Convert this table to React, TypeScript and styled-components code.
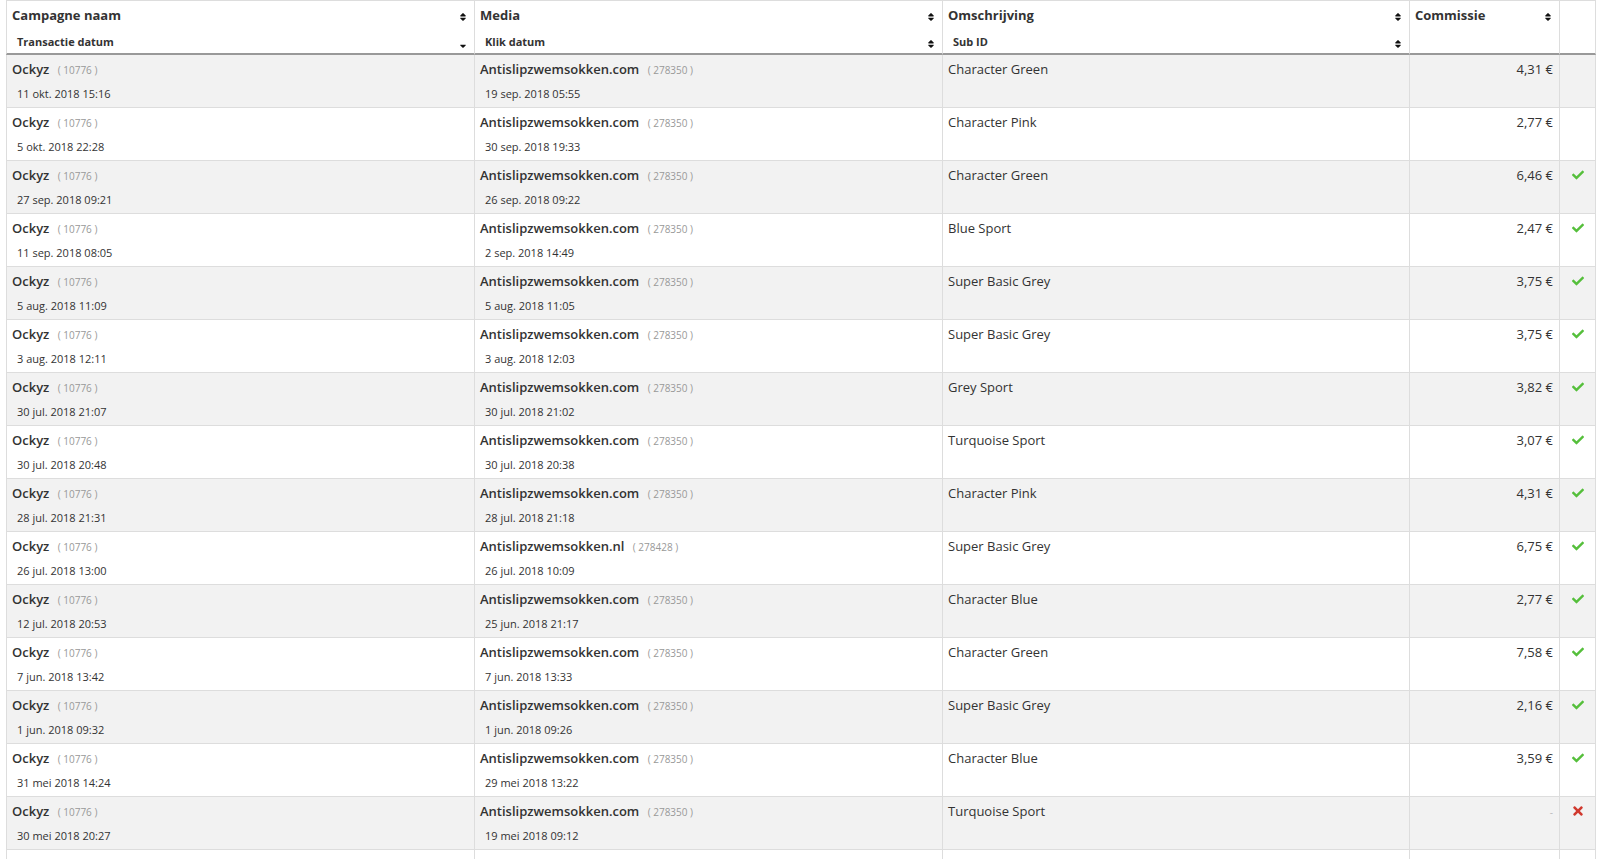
import React from "react";
import styled, { createGlobalStyle } from "styled-components";
import { FaSort, FaSortDown, FaCheck, FaTimes } from "react-icons/fa";

const GlobalStyle = createGlobalStyle`
  *, *::before, *::after { box-sizing: border-box; }
  html, body { margin: 0; padding: 0; background: #fff; }
  body {
    font-family: "Open Sans", "Liberation Sans", Arial, sans-serif;
    color: #333;
  }
`;

const Page = styled.div`
  padding: 0 0 0 6px;
`;

const Table = styled.table`
  width: 1590px;
  table-layout: fixed;
  border-collapse: separate;
  border-spacing: 0;
`;

const HeadCell = styled.th<{ $last?: boolean }>`
  height: 55px;
  padding: 5px 6px 0 5px;
  vertical-align: top;
  text-align: left;
  background: #fff;
  border-top: 1px solid #ddd;
  border-left: 1px solid #ddd;
  border-right: ${(p) => (p.$last ? "1px solid #ddd" : "0")};
  border-bottom: 2px solid #999;
`;

const HeadMain = styled.div`
  display: flex;
  align-items: center;
  justify-content: space-between;
  height: 18px;
  font-size: 13px;
  line-height: 18px;
  font-weight: 700;
  color: #333;
`;

const HeadSub = styled.div`
  display: flex;
  align-items: center;
  justify-content: space-between;
  height: 16px;
  margin-top: 10px;
  padding-left: 5px;
  font-size: 11px;
  line-height: 16px;
  font-weight: 700;
  color: #333;
`;

const SortMark = styled.span`
  display: inline-flex;
  margin-top: 4px;
  color: #111;
  font-size: 10px;
`;

const Row = styled.tr<{ $odd: boolean }>`
  background: ${(p) => (p.$odd ? "#f2f2f2" : "#fff")};
`;

const Cell = styled.td<{ $align?: "left" | "right" | "center"; $last?: boolean }>`
  height: 53px;
  padding: 5px ${(p) => (p.$align === "right" ? "6px" : "5px")} 0 5px;
  vertical-align: top;
  text-align: ${(p) => p.$align || "left"};
  border-top: 1px solid #ddd;
  border-left: 1px solid #ddd;
  border-right: ${(p) => (p.$last ? "1px solid #ddd" : "0")};
  tr:first-child > & {
    border-top: 0;
    height: 52px;
  }
`;

const MainLine = styled.div<{ $strong?: boolean }>`
  height: 18px;
  font-size: 13px;
  line-height: 18px;
  font-weight: ${(p) => (p.$strong ? 600 : 400)};
  color: #333;
  white-space: nowrap;
`;

const IdNote = styled.span`
  margin-left: 5px;
  font-size: 10px;
  font-weight: 400;
  color: #999;
`;

const DateLine = styled.div`
  margin-top: 8px;
  padding-left: 5px;
  font-size: 11px;
  line-height: 15px;
  color: #333;
  white-space: nowrap;
`;

const Empty = styled.span`
  font-size: 10px;
  color: #bbb;
`;

const StatusLine = styled.div`
  display: flex;
  align-items: center;
  justify-content: center;
  height: 18px;
`;

const Mark = styled.span<{ $tone: "ok" | "bad" }>`
  display: inline-flex;
  color: ${(p) => (p.$tone === "ok" ? "#55bf3b" : "#d0392e")};
`;

type Status = "none" | "ok" | "bad";

interface Tx {
  trans: string;
  media: string;
  mediaId: string;
  click: string;
  sub: string;
  amount: string | null;
  status: Status;
}

const C = "Antislipzwemsokken.com";

const rows: Tx[] = [
  { trans: "11 okt. 2018 15:16", media: C, mediaId: "278350", click: "19 sep. 2018 05:55", sub: "Character Green", amount: "4,31 €", status: "none" },
  { trans: "5 okt. 2018 22:28", media: C, mediaId: "278350", click: "30 sep. 2018 19:33", sub: "Character Pink", amount: "2,77 €", status: "none" },
  { trans: "27 sep. 2018 09:21", media: C, mediaId: "278350", click: "26 sep. 2018 09:22", sub: "Character Green", amount: "6,46 €", status: "ok" },
  { trans: "11 sep. 2018 08:05", media: C, mediaId: "278350", click: "2 sep. 2018 14:49", sub: "Blue Sport", amount: "2,47 €", status: "ok" },
  { trans: "5 aug. 2018 11:09", media: C, mediaId: "278350", click: "5 aug. 2018 11:05", sub: "Super Basic Grey", amount: "3,75 €", status: "ok" },
  { trans: "3 aug. 2018 12:11", media: C, mediaId: "278350", click: "3 aug. 2018 12:03", sub: "Super Basic Grey", amount: "3,75 €", status: "ok" },
  { trans: "30 jul. 2018 21:07", media: C, mediaId: "278350", click: "30 jul. 2018 21:02", sub: "Grey Sport", amount: "3,82 €", status: "ok" },
  { trans: "30 jul. 2018 20:48", media: C, mediaId: "278350", click: "30 jul. 2018 20:38", sub: "Turquoise Sport", amount: "3,07 €", status: "ok" },
  { trans: "28 jul. 2018 21:31", media: C, mediaId: "278350", click: "28 jul. 2018 21:18", sub: "Character Pink", amount: "4,31 €", status: "ok" },
  { trans: "26 jul. 2018 13:00", media: "Antislipzwemsokken.nl", mediaId: "278428", click: "26 jul. 2018 10:09", sub: "Super Basic Grey", amount: "6,75 €", status: "ok" },
  { trans: "12 jul. 2018 20:53", media: C, mediaId: "278350", click: "25 jun. 2018 21:17", sub: "Character Blue", amount: "2,77 €", status: "ok" },
  { trans: "7 jun. 2018 13:42", media: C, mediaId: "278350", click: "7 jun. 2018 13:33", sub: "Character Green", amount: "7,58 €", status: "ok" },
  { trans: "1 jun. 2018 09:32", media: C, mediaId: "278350", click: "1 jun. 2018 09:26", sub: "Super Basic Grey", amount: "2,16 €", status: "ok" },
  { trans: "31 mei 2018 14:24", media: C, mediaId: "278350", click: "29 mei 2018 13:22", sub: "Character Blue", amount: "3,59 €", status: "ok" },
  { trans: "30 mei 2018 20:27", media: C, mediaId: "278350", click: "19 mei 2018 09:12", sub: "Turquoise Sport", amount: null, status: "bad" },
  { trans: "28 mei 2018 19:41", media: C, mediaId: "278350", click: "28 mei 2018 19:30", sub: "Character Pink", amount: "4,31 €", status: "ok" },
];

const Sort = ({ down }: { down?: boolean }) => (
  <SortMark>{down ? <FaSortDown size={10} /> : <FaSort size={10} />}</SortMark>
);

export default function App() {
  return (
    <>
      <GlobalStyle />
      <Page>
        <Table>
          <colgroup>
            <col style={{ width: 468 }} />
            <col style={{ width: 468 }} />
            <col style={{ width: 467 }} />
            <col style={{ width: 150 }} />
            <col style={{ width: 37 }} />
          </colgroup>
          <thead>
            <tr>
              <HeadCell>
                <HeadMain>Campagne naam<Sort /></HeadMain>
                <HeadSub>Transactie datum<Sort down /></HeadSub>
              </HeadCell>
              <HeadCell>
                <HeadMain>Media<Sort /></HeadMain>
                <HeadSub>Klik datum<Sort /></HeadSub>
              </HeadCell>
              <HeadCell>
                <HeadMain>Omschrijving<Sort /></HeadMain>
                <HeadSub>Sub ID<Sort /></HeadSub>
              </HeadCell>
              <HeadCell>
                <HeadMain>Commissie<Sort /></HeadMain>
              </HeadCell>
              <HeadCell $last />
            </tr>
          </thead>
          <tbody>
            {rows.map((r, i) => (
              <Row key={i} $odd={i % 2 === 0}>
                <Cell>
                  <MainLine $strong>
                    Ockyz <IdNote>( 10776 )</IdNote>
                  </MainLine>
                  <DateLine>{r.trans}</DateLine>
                </Cell>
                <Cell>
                  <MainLine $strong>
                    {r.media} <IdNote>( {r.mediaId} )</IdNote>
                  </MainLine>
                  <DateLine>{r.click}</DateLine>
                </Cell>
                <Cell>
                  <MainLine>{r.sub}</MainLine>
                </Cell>
                <Cell $align="right">
                  <MainLine>{r.amount ?? <Empty>-</Empty>}</MainLine>
                </Cell>
                <Cell $align="center" $last>
                  <StatusLine>
                    {r.status === "ok" && (
                      <Mark $tone="ok"><FaCheck size={12} /></Mark>
                    )}
                    {r.status === "bad" && (
                      <Mark $tone="bad"><FaTimes size={14} /></Mark>
                    )}
                  </StatusLine>
                </Cell>
              </Row>
            ))}
          </tbody>
        </Table>
      </Page>
    </>
  );
}
